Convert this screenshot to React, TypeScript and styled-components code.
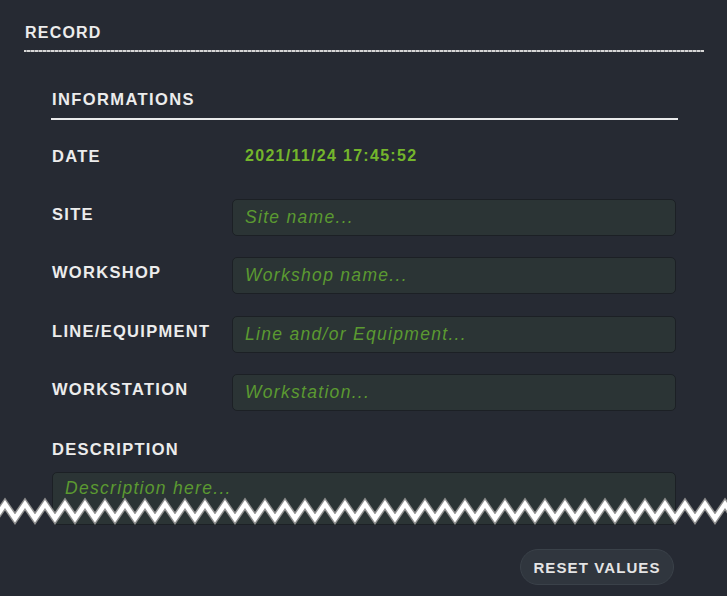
import React from "react";
import styled, { createGlobalStyle } from "styled-components";

const Global = createGlobalStyle`
  html, body { margin: 0; padding: 0; background: #262a33; }
  body { font-family: "Liberation Sans", Arial, sans-serif; }
  * { box-sizing: border-box; }
`;

const Page = styled.div`
  position: relative;
  width: 727px;
  height: 596px;
  overflow: hidden;
  padding: 23px 23px 0 24px;
  background: #262a33;
`;

const Title = styled.h1`
  margin: 0;
  font-size: 16px;
  line-height: 20px;
  font-weight: 700;
  letter-spacing: 1.2px;
  color: #ececec;
  padding: 0 0 7px 1px;
  border-bottom: 2px solid transparent;
  border-image: repeating-linear-gradient(
      90deg,
      #d6d6d6 0px,
      #d6d6d6 3px,
      #8d8f93 3px,
      #8d8f93 4px
    )
    1;
`;

const Section = styled.section`
  margin: 37px 26px 0 27px;
  display: flex;
  flex-direction: column;
`;

const SubTitle = styled.h2`
  margin: 0;
  font-size: 16.5px;
  line-height: 20px;
  font-weight: 700;
  letter-spacing: 1.4px;
  color: #ececec;
  padding: 0 0 9px 1px;
  border-bottom: 2px solid rgba(255, 255, 255, 0.9);
`;

const Rows = styled.div`
  margin-top: 20px;
  display: flex;
  flex-direction: column;
  gap: 21.5px;
`;

const Row = styled.div`
  display: flex;
  align-items: flex-start;
  height: 37px;
`;

const Label = styled.label<{ $pad?: number }>`
  flex: 0 0 181px;
  padding: ${(p) => p.$pad ?? 5}px 0 0 1px;
  font-size: 16.5px;
  line-height: 20px;
  font-weight: 700;
  letter-spacing: 1.3px;
  color: #ececec;
`;

const DateValue = styled.span`
  padding: 6px 0 0 13px;
  font-size: 16px;
  line-height: 20px;
  font-weight: 700;
  letter-spacing: 1.3px;
  color: #74b52c;
`;

const TextInput = styled.input`
  flex: 1;
  height: 37px;
  margin-right: 2px;
  padding: 0 12px;
  border: 1px solid #1c2025;
  border-radius: 5px;
  background: #2b3435;
  color: #cfe8c0;
  font-family: "Liberation Sans", Arial, sans-serif;
  font-size: 17.5px;
  font-style: italic;
  letter-spacing: 1.3px;
  outline: none;
  &::placeholder {
    color: #5b9a31;
    font-style: italic;
    opacity: 1;
  }
`;

const DescLabel = styled.label`
  margin-top: 28px;
  padding-left: 1px;
  font-size: 16.5px;
  line-height: 20px;
  font-weight: 700;
  letter-spacing: 1.3px;
  color: #ececec;
`;

const TextArea = styled.textarea`
  margin: 13px 2px 0 1px;
  height: 53px;
  padding: 5px 12px;
  border: 1px solid #1c2025;
  border-radius: 5px;
  background: #2b3435;
  resize: none;
  color: #cfe8c0;
  font-family: "Liberation Sans", Arial, sans-serif;
  font-size: 17.5px;
  line-height: 20px;
  font-style: italic;
  letter-spacing: 1.3px;
  outline: none;
  &::placeholder {
    color: #5b9a31;
    opacity: 1;
  }
`;

const Footer = styled.div`
  display: flex;
  justify-content: flex-end;
  margin-top: 24px;
  padding-right: 4px;
`;

const ResetButton = styled.button`
  width: 154px;
  height: 36px;
  border-radius: 18px;
  border: 1px solid #3a4149;
  background: #30363e;
  color: #e4e4e4;
  font-family: "Liberation Sans", Arial, sans-serif;
  font-size: 15px;
  font-weight: 700;
  letter-spacing: 1.1px;
  cursor: pointer;
  padding: 0;
`;

const Tear = styled.svg`
  position: absolute;
  left: 0;
  top: 496px;
  pointer-events: none;
`;

function zigzag(): string {
  const pts: string[] = [];
  for (let i = -2; i <= 76; i++) {
    const x = 5 + i * 10;
    const y = i % 2 === 0 ? 8 : 22.5;
    pts.push(`${x},${y}`);
  }
  return pts.join(" ");
}

const fields = [
  { label: "SITE", placeholder: "Site name..." },
  { label: "WORKSHOP", placeholder: "Workshop name..." },
  { label: "LINE/EQUIPMENT", placeholder: "Line and/or Equipment..." },
  { label: "WORKSTATION", placeholder: "Workstation..." },
];

export default function App() {
  const points = zigzag();
  return (
    <>
      <Global />
      <Page>
        <Title>RECORD</Title>
        <Section>
          <SubTitle>INFORMATIONS</SubTitle>
          <Rows>
            <Row>
              <Label $pad={6}>DATE</Label>
              <DateValue>2021/11/24 17:45:52</DateValue>
            </Row>
            {fields.map((f) => (
              <Row key={f.label}>
                <Label>{f.label}</Label>
                <TextInput placeholder={f.placeholder} />
              </Row>
            ))}
          </Rows>
          <DescLabel>DESCRIPTION</DescLabel>
          <TextArea placeholder="Description here..." />
          <Footer>
            <ResetButton>RESET VALUES</ResetButton>
          </Footer>
        </Section>
        <Tear width="727" height="32" viewBox="0 0 727 32">
          <polyline
            points={points}
            fill="none"
            stroke="#8e8e8e"
            strokeWidth="7.5"
            strokeLinejoin="miter"
            strokeMiterlimit={10}
          />
          <polyline
            points={points}
            fill="none"
            stroke="#ffffff"
            strokeWidth="4.5"
            strokeLinejoin="miter"
            strokeMiterlimit={10}
          />
        </Tear>
      </Page>
    </>
  );
}
